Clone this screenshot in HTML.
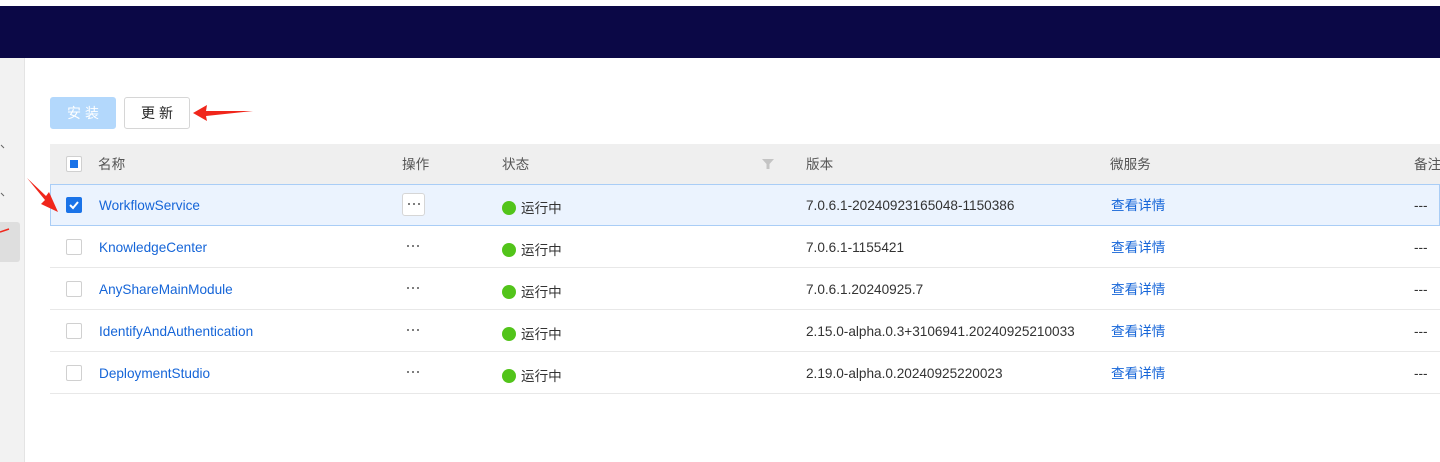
<!DOCTYPE html>
<html><head><meta charset="utf-8"><style>
*{margin:0;padding:0;box-sizing:border-box}
body{width:1440px;height:462px;background:#fff;position:relative;overflow:hidden;font-family:"Liberation Sans","Noto Sans CJK SC",sans-serif;font-size:13.6px;color:#333}
.top{position:absolute;left:0;top:6px;width:1440px;height:52px;background:#0b0846}
.side{position:absolute;left:0;top:58px;width:25px;height:404px;background:#f2f2f2;border-right:1px solid #e4e4e4}
.sel{position:absolute;left:0;top:222px;width:20px;height:40px;background:#dedede;border-radius:0 3px 3px 0}
.btn{position:absolute;top:97px;height:32px;width:66px;border-radius:3px;text-align:center;line-height:30px;font-size:14px;letter-spacing:4px;padding-left:4px}
.b1{left:50px;background:#b3d8fc;color:#fff;border:1px solid #b3d8fc}
.b2{left:124px;background:#fff;color:#222;border:1px solid #d6d6d6}
.hdr{position:absolute;left:50px;top:144px;width:1390px;height:40px;background:#efefef}
.row{position:absolute;left:50px;width:1390px;height:42px;border-bottom:1px solid #e8e8e8}
.row.s{background:#ebf3fe;border:1px solid #a9cdf6}
.t{position:absolute;white-space:nowrap;line-height:18px}
.cb{position:absolute;left:16px;width:16px;height:16px;border:1px solid #d0d0d0;border-radius:2px;background:#fff}
a{color:#1565d8;text-decoration:none}
.dot{display:inline-block;width:14px;height:14px;border-radius:50%;background:#52c41a;vertical-align:-2px;margin-right:5px}
.dd{position:absolute;width:14px;height:4px}
.dd i{position:absolute;top:0;width:2px;height:2px;border-radius:50%;background:#555}
</style></head><body>
<div class="top"></div>
<div class="side"></div><div class="sel"></div>
<div class="btn b1">安装</div><div class="btn b2">更新</div>
<div class="hdr">
 <div class="cb" style="top:12px"><div style="position:absolute;left:3px;top:3px;width:8px;height:8px;background:#1a73e8"></div></div>
 <span class="t" style="left:48px;top:12px;color:#555">名称</span>
 <span class="t" style="left:352px;top:12px;color:#555">操作</span>
 <span class="t" style="left:452px;top:12px;color:#555">状态</span>
 <svg class="t" style="left:712px;top:14px" width="12" height="12"><path d="M0 1h12L7.5 6v5h-3V6z" fill="#c4c4c4"/></svg>
 <span class="t" style="left:756px;top:12px;color:#555">版本</span>
 <span class="t" style="left:1060px;top:12px;color:#555">微服务</span>
 <span class="t" style="left:1364px;top:12px;color:#555">备注</span>
</div>
<div class="row s" style="top:184px">
 <div class="cb" style="top:12px;left:15px;background:#1a73e8;border-color:#1a73e8"><svg width="14" height="14" style="position:absolute;left:0;top:0"><path d="M3 7l3 3 5-6" stroke="#fff" stroke-width="2" fill="none"/></svg></div>
 <a class="t" style="left:48px;top:12px">WorkflowService</a>
 <div class="t" style="left:351px;top:8px;width:23px;height:23px;border:1px solid #d6d6d6;border-radius:3px;background:#fff"><div class="dd" style="left:5px;top:9px"><i style="left:0"></i><i style="left:5px"></i><i style="left:10px"></i></div></div>
 <span class="t" style="left:451px;top:15px"><span class="dot"></span>运行中</span>
 <span class="t" style="left:755px;top:12px">7.0.6.1-20240923165048-1150386</span>
 <a class="t" style="left:1060px;top:12px">查看详情</a>
 <span class="t" style="left:1363px;top:12px">---</span>
</div>
<div class="row" style="top:226px"><div class="cb" style="top:13px"></div><a class="t" style="left:49px;top:13px">KnowledgeCenter</a><div class="dd" style="left:357px;top:19px"><i style="left:0"></i><i style="left:5px"></i><i style="left:10px"></i></div><span class="t" style="left:452px;top:16px"><span class="dot"></span>运行中</span><span class="t" style="left:756px;top:13px">7.0.6.1-1155421</span><a class="t" style="left:1061px;top:13px">查看详情</a><span class="t" style="left:1364px;top:13px">---</span></div>
<div class="row" style="top:268px"><div class="cb" style="top:13px"></div><a class="t" style="left:49px;top:13px">AnyShareMainModule</a><div class="dd" style="left:357px;top:19px"><i style="left:0"></i><i style="left:5px"></i><i style="left:10px"></i></div><span class="t" style="left:452px;top:16px"><span class="dot"></span>运行中</span><span class="t" style="left:756px;top:13px">7.0.6.1.20240925.7</span><a class="t" style="left:1061px;top:13px">查看详情</a><span class="t" style="left:1364px;top:13px">---</span></div>
<div class="row" style="top:310px"><div class="cb" style="top:13px"></div><a class="t" style="left:49px;top:13px">IdentifyAndAuthentication</a><div class="dd" style="left:357px;top:19px"><i style="left:0"></i><i style="left:5px"></i><i style="left:10px"></i></div><span class="t" style="left:452px;top:16px"><span class="dot"></span>运行中</span><span class="t" style="left:756px;top:13px">2.15.0-alpha.0.3+3106941.20240925210033</span><a class="t" style="left:1061px;top:13px">查看详情</a><span class="t" style="left:1364px;top:13px">---</span></div>
<div class="row" style="top:352px"><div class="cb" style="top:13px"></div><a class="t" style="left:49px;top:13px">DeploymentStudio</a><div class="dd" style="left:357px;top:19px"><i style="left:0"></i><i style="left:5px"></i><i style="left:10px"></i></div><span class="t" style="left:452px;top:16px"><span class="dot"></span>运行中</span><span class="t" style="left:756px;top:13px">2.19.0-alpha.0.20240925220023</span><a class="t" style="left:1061px;top:13px">查看详情</a><span class="t" style="left:1364px;top:13px">---</span></div>
<svg style="position:absolute;left:0;top:0" width="260" height="260">
 <polygon points="193,113 207,105 206,111 253,111 206,116 207,121" fill="#f0261b"/>
 <polygon points="27,178 46,196 49,192 58,212 41,204 45,200" fill="#f0261b"/>
 <path d="M0 232L9 229" stroke="#f0261b" stroke-width="1.5"/>
 <path d="M1 145l3 3M1 193l3 3M1 335l3 3" stroke="#666" stroke-width="1"/>
</svg>
</body></html>
